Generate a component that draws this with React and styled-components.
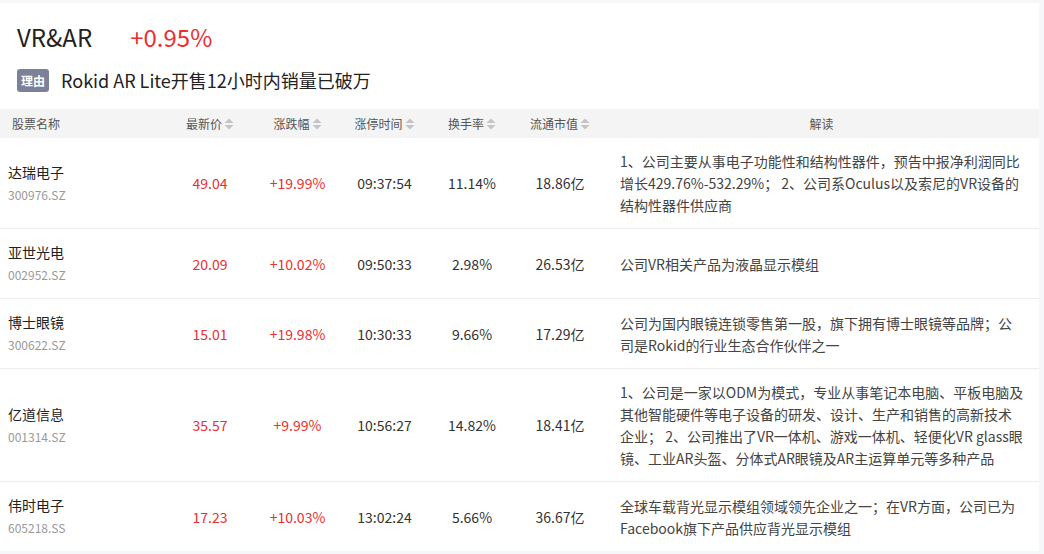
import React from "react";
import styled, { createGlobalStyle } from "styled-components";

const GlobalStyle = createGlobalStyle`
  html, body {
    margin: 0;
    padding: 0;
    background: #f6f7f9;
    font-family: "Noto Sans CJK SC", "Noto Sans", sans-serif;
  }
`;

const Page = styled.div`
  padding: 3px 5px 3px 0;
`;

const Card = styled.div`
  background: #ffffff;
`;

const Head = styled.div`
  padding: 17px 17px 16px;
`;

const TitleRow = styled.div`
  display: flex;
  align-items: center;
  height: 32px;
`;

const Title = styled.span`
  font-size: 24px;
  color: #222;
`;

const Change = styled.span`
  font-size: 24px;
  color: #e93030;
  margin-left: 38px;
`;

const ReasonRow = styled.div`
  display: flex;
  align-items: center;
  margin-top: 15px;
`;

const Badge = styled.span`
  display: inline-flex;
  align-items: center;
  justify-content: center;
  width: 32px;
  height: 23px;
  border-radius: 3px;
  background: #7a8198;
  color: #fff;
  font-size: 12px;
  font-weight: 700;
`;

const Reason = styled.span`
  margin-left: 12px;
  font-size: 18px;
  color: #222;
`;

const cols = "166px 88px 87px 87px 88px 88px 1fr";

const HeaderRow = styled.div`
  display: grid;
  grid-template-columns: ${cols};
  height: 29px;
  align-items: center;
  background: #f4f4f4;
  font-size: 12px;
  color: #555;
`;

const HeadCell = styled.div`
  display: flex;
  align-items: center;
  justify-content: ${(p) => (p.$left ? "flex-start" : "center")};
  padding-left: ${(p) => (p.$left ? "12px" : "0")};
`;

const Row = styled.div`
  display: grid;
  grid-template-columns: ${cols};
  align-items: center;
  padding: 12px 0;
  border-bottom: 1px solid #ececec;
  &:last-child {
    border-bottom: none;
  }
`;

const NameCell = styled.div`
  padding-left: 8px;
`;

const Name = styled.div`
  font-size: 14px;
  line-height: 22px;
  color: #222;
`;

const Code = styled.div`
  font-size: 12px;
  line-height: 23px;
  color: #999;
`;

const Value = styled.div`
  text-align: center;
  font-size: 14px;
  color: ${(p) => (p.$red ? "#e93030" : "#333")};
`;

const Desc = styled.div`
  padding: 0 14px 0 16px;
  font-size: 14px;
  line-height: 22px;
  color: #444;
`;

const SortIcon = () => (
  <svg width="10" height="12" viewBox="0 0 10 12" style={{ marginLeft: 2 }}>
    <path d="M5 0.5 L9.5 5 L0.5 5 Z" fill="#c4c4c4" />
    <path d="M5 11.5 L9.5 7 L0.5 7 Z" fill="#c4c4c4" />
  </svg>
);

const rows = [
  {
    name: "达瑞电子",
    code: "300976.SZ",
    price: "49.04",
    pct: "+19.99%",
    time: "09:37:54",
    turnover: "11.14%",
    cap: "18.86亿",
    desc: "1、公司主要从事电子功能性和结构性器件，预告中报净利润同比增长429.76%-532.29%； 2、公司系Oculus以及索尼的VR设备的结构性器件供应商",
  },
  {
    name: "亚世光电",
    code: "002952.SZ",
    price: "20.09",
    pct: "+10.02%",
    time: "09:50:33",
    turnover: "2.98%",
    cap: "26.53亿",
    desc: "公司VR相关产品为液晶显示模组",
  },
  {
    name: "博士眼镜",
    code: "300622.SZ",
    price: "15.01",
    pct: "+19.98%",
    time: "10:30:33",
    turnover: "9.66%",
    cap: "17.29亿",
    desc: "公司为国内眼镜连锁零售第一股，旗下拥有博士眼镜等品牌；公司是Rokid的行业生态合作伙伴之一",
  },
  {
    name: "亿道信息",
    code: "001314.SZ",
    price: "35.57",
    pct: "+9.99%",
    time: "10:56:27",
    turnover: "14.82%",
    cap: "18.41亿",
    desc: "1、公司是一家以ODM为模式，专业从事笔记本电脑、平板电脑及其他智能硬件等电子设备的研发、设计、生产和销售的高新技术企业； 2、公司推出了VR一体机、游戏一体机、轻便化VR glass眼镜、工业AR头盔、分体式AR眼镜及AR主运算单元等多种产品",
  },
  {
    name: "伟时电子",
    code: "605218.SS",
    price: "17.23",
    pct: "+10.03%",
    time: "13:02:24",
    turnover: "5.66%",
    cap: "36.67亿",
    desc: "全球车载背光显示模组领域领先企业之一；在VR方面，公司已为Facebook旗下产品供应背光显示模组",
  },
];

export default function App() {
  return (
    <Page>
      <GlobalStyle />
      <Card>
        <Head>
          <TitleRow>
            <Title>VR&amp;AR</Title>
            <Change>+0.95%</Change>
          </TitleRow>
          <ReasonRow>
            <Badge>理由</Badge>
            <Reason>Rokid AR Lite开售12小时内销量已破万</Reason>
          </ReasonRow>
        </Head>
        <HeaderRow>
          <HeadCell $left>股票名称</HeadCell>
          <HeadCell>最新价<SortIcon /></HeadCell>
          <HeadCell>涨跌幅<SortIcon /></HeadCell>
          <HeadCell>涨停时间<SortIcon /></HeadCell>
          <HeadCell>换手率<SortIcon /></HeadCell>
          <HeadCell>流通市值<SortIcon /></HeadCell>
          <HeadCell>解读</HeadCell>
        </HeaderRow>
        {rows.map((r) => (
          <Row key={r.code}>
            <NameCell>
              <Name>{r.name}</Name>
              <Code>{r.code}</Code>
            </NameCell>
            <Value $red>{r.price}</Value>
            <Value $red>{r.pct}</Value>
            <Value>{r.time}</Value>
            <Value>{r.turnover}</Value>
            <Value>{r.cap}</Value>
            <Desc>{r.desc}</Desc>
          </Row>
        ))}
      </Card>
    </Page>
  );
}
